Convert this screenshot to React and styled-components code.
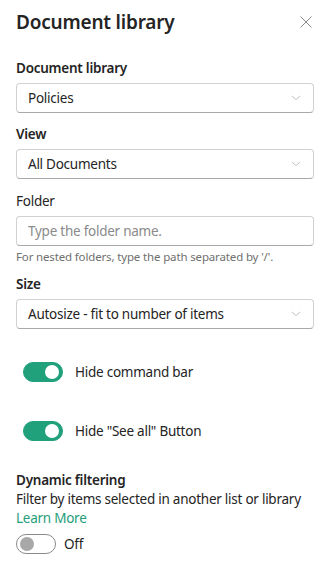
import styled, { createGlobalStyle } from "styled-components";

const GlobalStyle = createGlobalStyle`
  body {
    margin: 0;
    background: #fff;
    font-family: "Noto Sans", "Open Sans", sans-serif;
    color: #242424;
  }
`;

const Panel = styled.div`
  width: 329px;
  height: 568px;
  box-sizing: border-box;
  padding: 8px 15px 0 16px;
  display: flex;
  flex-direction: column;
  overflow: hidden;
`;

const Header = styled.div`
  display: flex;
  justify-content: space-between;
  align-items: center;
  height: 28px;
  margin-bottom: 17px;
`;

const Title = styled.h1`
  margin: 0;
  font-size: 19px;
  font-weight: 600;
  line-height: 28px;
  letter-spacing: -0.2px;
`;

const CloseButton = styled.button`
  background: none;
  border: none;
  padding: 0;
  margin-right: 2px;
  width: 12px;
  height: 12px;
  display: flex;
  cursor: pointer;
`;

const Field = styled.div`
  display: flex;
  flex-direction: column;
  margin-bottom: ${(p) => p.$gap || 6}px;
`;

const Label = styled.label`
  font-size: 13.5px;
  line-height: 20px;
  padding: 5px 0;
  font-weight: ${(p) => (p.$plain ? 400 : 600)};
  letter-spacing: -0.25px;
`;

const Box = styled.div`
  height: 30px;
  box-sizing: border-box;
  border: 1px solid #d1d1d1;
  border-bottom-color: #a8a8a8;
  border-radius: 4px;
  display: flex;
  align-items: center;
  justify-content: space-between;
  padding: 0 12px 0 11px;
  font-size: 13.5px;
  letter-spacing: -0.25px;
  color: #242424;
`;

const TextInput = styled.input`
  height: 30px;
  box-sizing: border-box;
  border: 1px solid #d1d1d1;
  border-bottom-color: #a8a8a8;
  border-radius: 4px;
  padding: 0 11px;
  font-family: inherit;
  font-size: 13.5px;
  letter-spacing: -0.25px;
  outline: none;
  &::placeholder {
    color: #8a8a8a;
  }
`;

const Helper = styled.div`
  font-size: 11.5px;
  line-height: 16px;
  margin-top: 3px;
  color: #707070;
  letter-spacing: -0.15px;
`;

const ToggleRow = styled.div`
  display: flex;
  align-items: center;
  height: 20px;
  gap: ${(p) => p.$gap || 12}px;
  padding-left: ${(p) => p.$indent || 0}px;
  margin-top: ${(p) => p.$top || 0}px;
  font-size: 13.5px;
  letter-spacing: -0.25px;
`;

const Track = styled.span`
  width: 40px;
  height: 20px;
  box-sizing: border-box;
  border-radius: 10px;
  display: flex;
  align-items: center;
  justify-content: ${(p) => (p.$on ? "flex-end" : "flex-start")};
  padding: 0 3px;
  background: ${(p) => (p.$on ? "#21a17b" : "#fff")};
  border: 1px solid ${(p) => (p.$on ? "#21a17b" : "#8a8a8a")};
`;

const Knob = styled.span`
  width: 14px;
  height: 14px;
  border-radius: 50%;
  background: ${(p) => (p.$on ? "#fff" : "#a8a8a8")};
`;

const SectionTitle = styled.div`
  font-size: 13.5px;
  font-weight: 600;
  line-height: 19px;
  margin-top: 30px;
  letter-spacing: -0.25px;
`;

const Text = styled.div`
  font-size: 13.5px;
  line-height: 19px;
  letter-spacing: -0.25px;
  white-space: nowrap;
`;

const LinkText = styled.a`
  font-size: 13.5px;
  line-height: 19px;
  color: #1fa07a;
  text-decoration: none;
  letter-spacing: -0.25px;
`;

function Chevron() {
  return (
    <svg width="10" height="6" viewBox="0 0 10 6">
      <path d="M1 0.8 L5 4.8 L9 0.8" fill="none" stroke="#bdbdbd" strokeWidth="1" />
    </svg>
  );
}

function Select({ value }) {
  return (
    <Box>
      <span>{value}</span>
      <Chevron />
    </Box>
  );
}

function Toggle({ on }) {
  return (
    <Track $on={on}>
      <Knob $on={on} />
    </Track>
  );
}

export default function App() {
  return (
    <Panel>
      <GlobalStyle />
      <Header>
        <Title>Document library</Title>
        <CloseButton aria-label="Close">
          <svg width="12" height="12" viewBox="0 0 12 12">
            <path d="M0.5 0.5 L11.5 11.5 M11.5 0.5 L0.5 11.5" stroke="#8a8a8a" strokeWidth="1" />
          </svg>
        </CloseButton>
      </Header>

      <Field>
        <Label>Document library</Label>
        <Select value="Policies" />
      </Field>
      <Field $gap={7}>
        <Label>View</Label>
        <Select value="All Documents" />
      </Field>
      <Field $gap={4}>
        <Label $plain>Folder</Label>
        <TextInput placeholder="Type the folder name." />
        <Helper>For nested folders, type the path separated by '/'.</Helper>
      </Field>
      <Field>
        <Label>Size</Label>
        <Select value="Autosize - fit to number of items" />
      </Field>

      <ToggleRow $indent={7} $top={27}>
        <Toggle on />
        <span>Hide command bar</span>
      </ToggleRow>
      <ToggleRow $indent={7} $top={39}>
        <Toggle on />
        <span>Hide "See all" Button</span>
      </ToggleRow>

      <SectionTitle>Dynamic filtering</SectionTitle>
      <Text>Filter by items selected in another list or library</Text>
      <LinkText href="#">Learn More</LinkText>
      <ToggleRow $gap={8} $indent={0} $top={6}>
        <Toggle />
        <span>Off</span>
      </ToggleRow>
    </Panel>
  );
}
